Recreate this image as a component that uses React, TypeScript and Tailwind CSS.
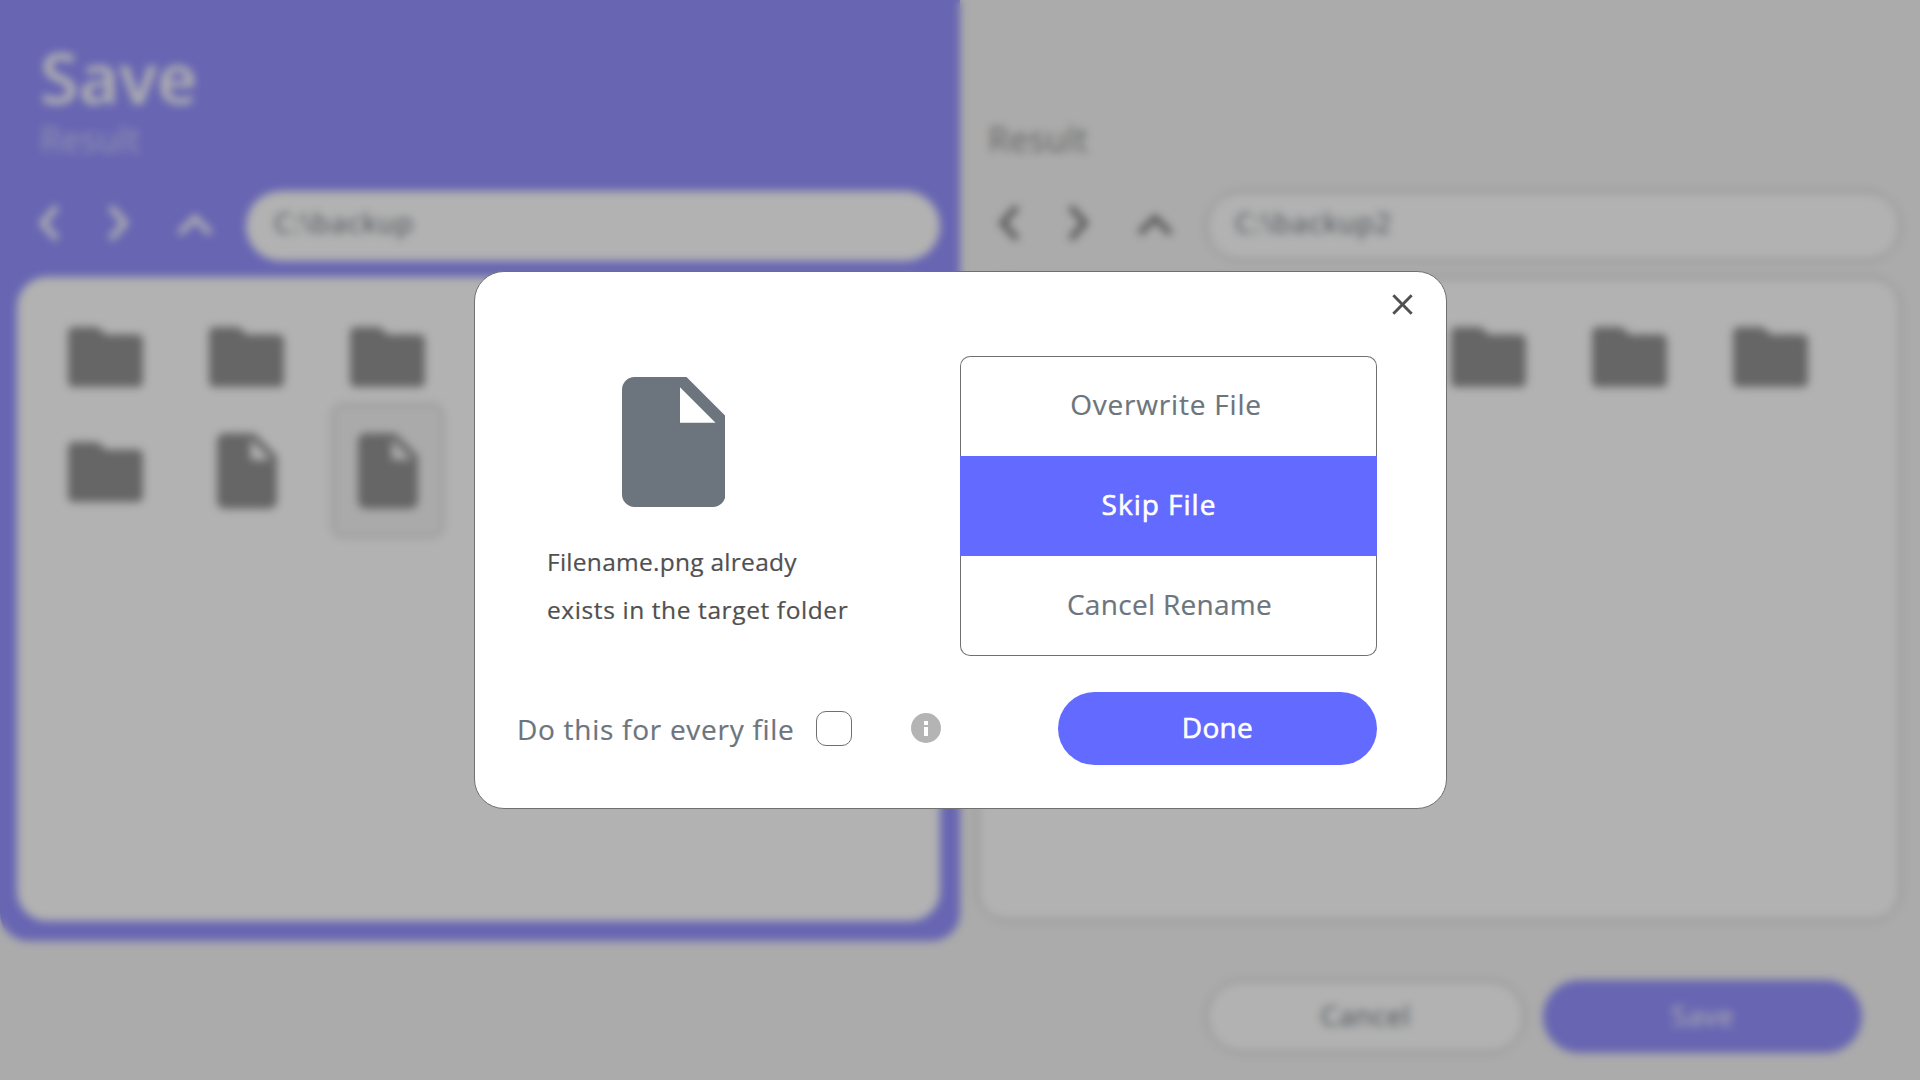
import type { ReactNode } from "react";

type EntryKind = "folder" | "file" | "selected";

function FolderIcon() {
  return (
    <svg className="block h-[60px] w-[75px] fill-[#929292]" viewBox="0 0 75 60">
      <path d="M6 0H27Q30 0 32 2L38 7.500H69Q75 7.500 75 13.500V54Q75 60 69 60H6Q0 60 0 54V6Q0 0 6 0Z" />
    </svg>
  );
}

function FileIcon({ className }: { className: string }) {
  return (
    <svg className={className} viewBox="0 0 103.5 130">
      <path
        fillRule="evenodd"
        d="M12.500 0H64.500L103.500 39V117.500A12.500 12.500 0 0 1 91 130H12.500A12.500 12.500 0 0 1 0 117.500V12.500A12.500 12.500 0 0 1 12.500 0ZM58 10.300V45.800H93.500Z"
      />
    </svg>
  );
}

function Entry({ kind }: { kind: EntryKind }) {
  if (kind === "folder") {
    return (
      <div className="flex items-center justify-center">
        <FolderIcon />
      </div>
    );
  }
  const icon = <FileIcon className="block h-[76px] w-[60px] fill-[#929292]" />;
  return (
    <div className="flex items-center justify-center pb-[2px]">
      {kind === "selected" ? (
        <div className="flex h-[133px] w-[111px] shrink-0 items-center justify-center rounded-[10px] border border-[#a0a0a0] bg-[#f4f4f4]">
          {icon}
        </div>
      ) : (
        icon
      )}
    </div>
  );
}

function NavArrows({ className }: { className: string }) {
  return (
    <div className={`flex w-[246px] items-center pb-1.5 pl-[37px] ${className}`}>
      <svg className="h-10 w-6 fill-none stroke-current stroke-[6]" viewBox="0 0 24 40">
        <path d="M20 4L5.500 20L20 36" />
      </svg>
      <svg className="ml-[46px] h-10 w-6 fill-none stroke-current stroke-[6]" viewBox="0 0 24 40">
        <path d="M3.500 4L18 20L3.500 36" />
      </svg>
      <svg className="ml-[46px] h-10 w-9 fill-none stroke-current stroke-[6]" viewBox="0 0 36 40">
        <path d="M2.500 30.500L18 15L33.500 30.500" />
      </svg>
    </div>
  );
}

function BrowserPane({
  title,
  path,
  entries,
  active,
}: {
  title?: string;
  path: string;
  entries: EntryKind[];
  active: boolean;
}) {
  const box = active ? "bg-white" : "bg-white border border-[#8c8c8c]";
  return (
    <section
      className={`flex h-[941px] w-[960px] flex-col ${active ? "rounded-b-[28px] bg-[#9592ff] pr-5" : "pr-[19px]"}`}
    >
      <div className={`flex h-[191px] flex-col ${active ? "pl-10" : "pl-[28px]"}`}>
        <h1 className="mt-[34px] h-[86px] text-[70px] leading-[86px] font-semibold tracking-[0.2px] text-white">
          {title}
        </h1>
        <p
          className={`text-[34px] leading-[38px] tracking-[0.4px] ${active ? "text-white/60" : "text-[#909090]"}`}
        >
          Result
        </p>
      </div>
      <div className="flex h-[70px]">
        <NavArrows className={active ? "text-white" : "text-[#7c7c7c]"} />
        <div
          className={`flex flex-1 items-center rounded-full pb-2 pl-7 text-[28px] tracking-[1.1px] text-[#6c757d] ${box}`}
        >
          {path}
        </div>
      </div>
      <div
        className={`mt-4 ml-[17px] grid h-[644px] auto-rows-[115px] grid-cols-[repeat(6,141px)] content-start rounded-[30px] ${active ? "pt-[22px] pl-[18px]" : "pt-[21px] pl-[17px]"} ${box}`}
      >
        {entries.map((kind, i) => (
          <Entry key={i} kind={kind} />
        ))}
      </div>
    </section>
  );
}

function Option({ children, className }: { children: ReactNode; className: string }) {
  return (
    <button className={`flex h-[100px] items-center justify-center text-[28px] ${className}`}>
      {children}
    </button>
  );
}

function ConflictDialog() {
  return (
    <div className="mt-[271px] ml-[474px] h-[538px] w-[973px] rounded-[30px] border border-[#707070] bg-white [-webkit-text-stroke:0.2px]">
      <div className="flex h-[84px] justify-end pt-[15px] pr-[26px]">
        <svg className="size-[35px] fill-[#505050]" viewBox="0 0 24 24">
          <path d="M19 6.410L17.590 5L12 10.590L6.410 5L5 6.410L10.590 12L5 17.590L6.410 19L12 13.410L17.590 19L19 17.590L13.410 12Z" />
        </svg>
      </div>
      <div className="flex h-[300px]">
        <div className="w-[485px] pl-[72px]">
          <FileIcon className="mt-[21.200px] ml-[74.500px] block h-[130px] w-[103.500px] fill-[#6c757d]" />
          <p className="mt-[30.800px] text-[24.500px] leading-[48px] text-[#505050]">
            <span className="block tracking-[0.27px]">Filename.png already</span>
            <span className="block tracking-[0.6px]">exists in the target folder</span>
          </p>
        </div>
        <div className="flex h-[300px] w-[417px] flex-col">
          <Option className="rounded-t-[10px] border border-b-0 border-[#707070] pr-[5px] pb-[5px] tracking-[0.8px] text-[#6c757d]">
            Overwrite File
          </Option>
          <Option className="bg-[#636aff] pr-[19px] pb-1 tracking-[1px] text-white [-webkit-text-stroke:0.6px]">
            Skip File
          </Option>
          <Option className="rounded-b-[10px] border border-t-0 border-[#707070] pb-1 pl-[2px] tracking-[0.3px] text-[#6c757d]">
            Cancel Rename
          </Option>
        </div>
      </div>
      <div className="mt-9 flex h-[73px] items-center pl-[41px]">
        <label className="w-[300px] pl-px text-[28px] leading-9 tracking-[0.72px] text-[#6c757d]">
          Do this for every file
        </label>
        <span className="h-[35px] w-[36px] rounded-[10px] border border-[#707070]" />
        <svg className="mb-px ml-[59px] size-[30px]" viewBox="0 0 30 30">
          <circle cx="15" cy="15" r="15" fill="#b4b4b4" />
          <path fill="#ffffff" d="M13 8H17V12H13ZM13 14H17V23H13Z" />
        </svg>
        <button className="ml-[117px] flex h-[73px] w-[319px] items-center justify-center rounded-full bg-[#636aff] pb-[3px] text-[28px] tracking-[0.3px] text-white [-webkit-text-stroke:0.6px]">
          Done
        </button>
      </div>
    </div>
  );
}

export default function App() {
  return (
    <div className="relative h-[1080px] w-[1920px] overflow-hidden bg-[#f5f5f5] font-['Open_Sans','Noto_Sans',sans-serif]">
      <main className="flex">
        <BrowserPane
          active
          title="Save"
          path="C:\backup"
          entries={["folder", "folder", "folder", "folder", "folder", "folder", "folder", "file", "selected"]}
        />
        <BrowserPane
          active={false}
          path="C:\backup2"
          entries={["folder", "folder", "folder", "folder", "folder", "folder"]}
        />
      </main>
      <footer className="mt-[39px] flex justify-end gap-[18px] pr-[58px] text-[28px] tracking-[0.6px]">
        <button className="h-[73px] w-[319px] rounded-full border border-[#8c8c8c] bg-white pb-1 text-[#6c757d]">
          Cancel
        </button>
        <button className="h-[73px] w-[319px] rounded-full bg-[#9592ff] pb-1 text-white">Save</button>
      </footer>
      <div className="absolute inset-0 bg-black/30 backdrop-blur-[4px]">
        <ConflictDialog />
      </div>
    </div>
  );
}
